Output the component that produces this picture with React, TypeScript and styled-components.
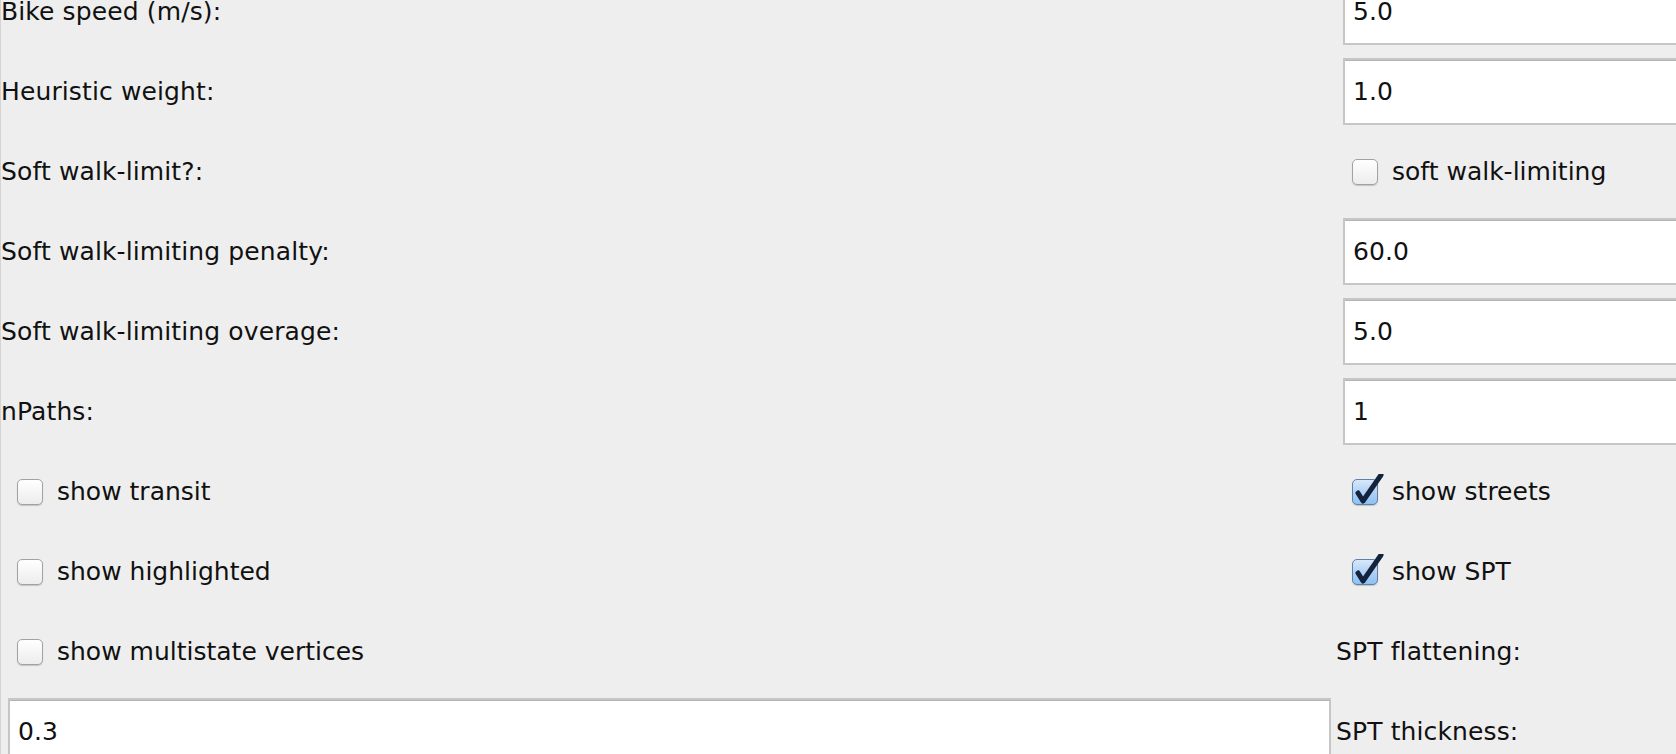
import * as React from 'react';
import styled, { createGlobalStyle } from 'styled-components';

type Cell =
  | { kind: 'label'; text: string }
  | { kind: 'field'; value: string }
  | { kind: 'check'; text: string; checked?: boolean };

const cells: Cell[] = [
  { kind: 'label', text: 'Bike speed (m/s):' },
  { kind: 'field', value: '5.0' },
  { kind: 'label', text: 'Heuristic weight:' },
  { kind: 'field', value: '1.0' },
  { kind: 'label', text: 'Soft walk-limit?:' },
  { kind: 'check', text: 'soft walk-limiting' },
  { kind: 'label', text: 'Soft walk-limiting penalty:' },
  { kind: 'field', value: '60.0' },
  { kind: 'label', text: 'Soft walk-limiting overage:' },
  { kind: 'field', value: '5.0' },
  { kind: 'label', text: 'nPaths:' },
  { kind: 'field', value: '1' },
  { kind: 'check', text: 'show transit' },
  { kind: 'check', text: 'show streets', checked: true },
  { kind: 'check', text: 'show highlighted' },
  { kind: 'check', text: 'show SPT', checked: true },
  { kind: 'check', text: 'show multistate vertices' },
  { kind: 'label', text: 'SPT flattening:' },
  { kind: 'field', value: '0.3' },
  { kind: 'label', text: 'SPT thickness:' },
];

const App: React.FC = () => (
  <>
    <GlobalStyle />
    <Page>
      <Grid>
        {cells.map((c, i) => {
          if (c.kind === 'label') return <Label key={i}>{c.text}</Label>;
          if (c.kind === 'field') return <Field key={i} defaultValue={c.value} />;
          return (
            <CheckRow key={i}>
              <Box checked={!!c.checked}>
                {c.checked && (
                  <Tick viewBox="0 0 36 36" width="36" height="36">
                    <path
                      d="M6 19 L11 27 L29 1"
                      fill="none"
                      stroke="#13223d"
                      strokeWidth="5"
                      strokeLinecap="round"
                      strokeLinejoin="round"
                    />
                  </Tick>
                )}
              </Box>
              {c.text}
            </CheckRow>
          );
        })}
      </Grid>
    </Page>
  </>
);

const GlobalStyle = createGlobalStyle`
  html, body {
    margin: 0;
    padding: 0;
    overflow: hidden;
    background: #eeeeee;
  }
  body {
    font-family: "DejaVu Sans", "Liberation Sans", sans-serif;
    color: #111;
  }
`;

const Page = styled.div`
  height: 754px;
  overflow: hidden;
  border-left: 1px solid #d4d4d4;
  background: #eeeeee;
`;

const Grid = styled.div`
  display: grid;
  grid-template-columns: 1335px 1335px;
  grid-auto-rows: 67px;
  row-gap: 13px;
  margin-top: -22px;
`;

const Label = styled.div`
  display: flex;
  align-items: center;
  font-size: 25px;
  letter-spacing: 0.12px;
  white-space: nowrap;
`;

const Field = styled.input`
  box-sizing: border-box;
  margin: 0 5px 0 7px;
  height: 67px;
  min-width: 0;
  padding: 0 0 0 8px;
  border: 2px solid #c6c6c6;
  box-shadow: inset 0 1px 0 #b4b4b4;
  background: #fff;
  font-family: "DejaVu Sans", "Liberation Sans", sans-serif;
  font-size: 25px;
  letter-spacing: 0.12px;
  color: #111;
  outline: none;
`;

const CheckRow = styled.label`
  display: flex;
  align-items: center;
  gap: 14px;
  padding-left: 16px;
  font-size: 25px;
  white-space: nowrap;
`;

const Box = styled.span<{ checked: boolean }>`
  position: relative;
  flex: none;
  box-sizing: border-box;
  width: 26px;
  height: 26px;
  border-radius: 5px;
  border: 1.5px solid ${(p) => (p.checked ? '#5f7fa3' : '#a2a2a2')};
  background: ${(p) =>
    p.checked
      ? 'linear-gradient(#d8e8fa, #b0d2f5 50%, #8cc0f2)'
      : 'linear-gradient(#ffffff, #f6f6f6 50%, #ececec)'};
  box-shadow: 0 1px 1px rgba(0, 0, 0, 0.18);
`;

const Tick = styled.svg`
  position: absolute;
  left: -1px;
  top: -6px;
`;

export default App;
